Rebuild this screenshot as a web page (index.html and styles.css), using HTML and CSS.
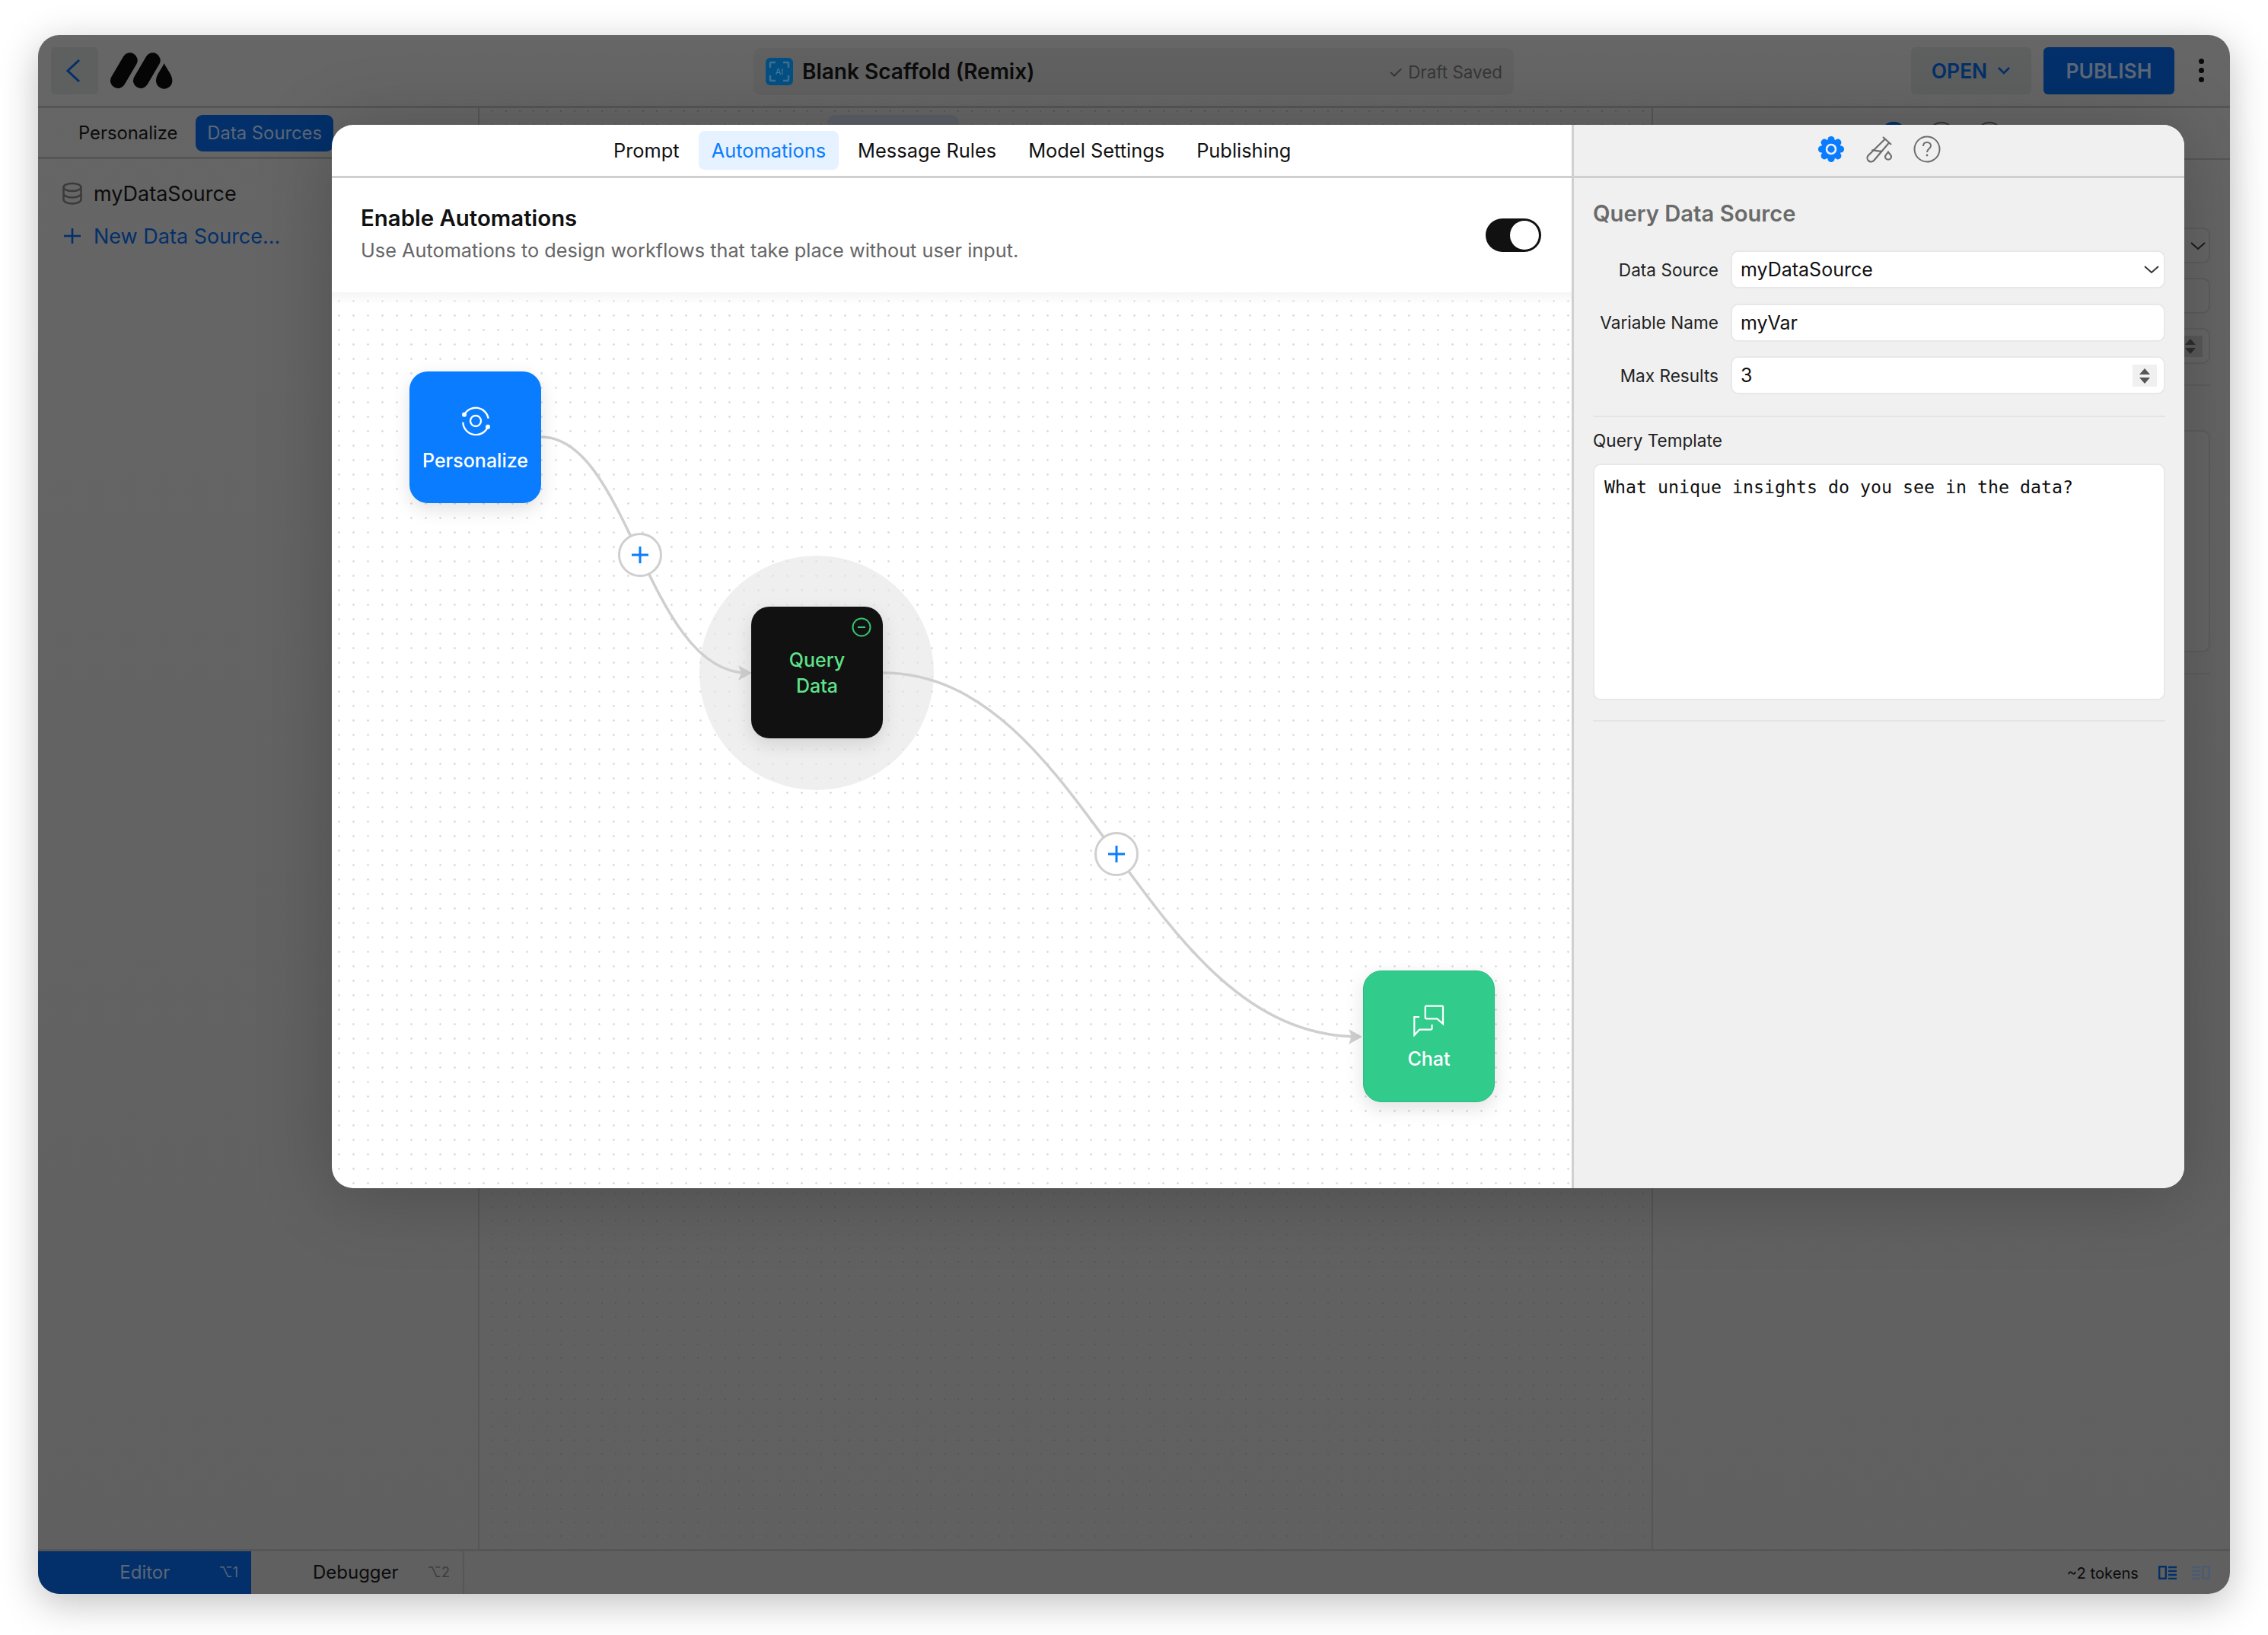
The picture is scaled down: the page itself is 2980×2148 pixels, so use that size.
FILE: index.html
```html
<!DOCTYPE html>
<html lang="en">
<head>
    <meta charset="UTF-8">
    <title>Blank Scaffold (Remix)</title>
    <link rel="stylesheet" href="styles.css">
</head>
<body>
    <div class="window">
        <header class="topbar">
            <div class="top-left">
                <button class="back-btn">
                    <svg width="20" height="30" viewBox="0 0 20 30"><path d="M18 1 L3 15 L18 29" fill="none" stroke="#03306a" stroke-width="3"/></svg>
                </button>
                <svg class="logo" width="84" height="48" viewBox="0 0 84 48">
                    <path d="M11 37 L26.700 10.300 M41 37 L56.700 10.300" stroke="#050505" stroke-width="20" stroke-linecap="round"/>
                    <path d="M71.700 14 C75 22 82.400 29 82.400 37 A10.700 10.700 0 0 1 61 37 C61 29 68.400 22 71.700 14 Z" fill="#050505"/>
                </svg>
            </div>
            <div class="title-pill">
                <div class="ai-icon">
                    <span class="ai-text">AI</span>
                    <svg width="36" height="36" viewBox="0 0 36 36"><path d="M6 13 V7 a1 1 0 0 1 1 -1 H13 M23 6 H29 a1 1 0 0 1 1 1 V13 M30 23 V29 a1 1 0 0 1 -1 1 H23 M13 30 H7 a1 1 0 0 1 -1 -1 V23" fill="none" stroke="#3f6f93" stroke-width="2.500"/></svg>
                </div>
                <span class="title-text">Blank Scaffold (Remix)</span>
                <span class="draft">✓ Draft Saved</span>
            </div>
            <div class="top-right">
                <button class="open-btn">OPEN
                    <svg width="18" height="12" viewBox="0 0 18 12"><path d="M2 2 L9 9 L16 2" fill="none" stroke="#03306a" stroke-width="2.500"/></svg>
                </button>
                <button class="publish-btn">PUBLISH</button>
                <div class="more"><i></i><i></i><i></i></div>
            </div>
        </header>

        <div class="main">
            <aside class="left-panel">
                <div class="sub-tabs">
                    <span class="sub-tab">Personalize</span>
                    <span class="sub-tab sub-tab-on">Data Sources</span>
                </div>
                <div class="source-row">
                    <svg width="28" height="30" viewBox="0 0 28 30"><g fill="none" stroke="#3a3a3a" stroke-width="2.400"><ellipse cx="14" cy="7" rx="11.500" ry="5"/><path d="M2.500 7 V23 C2.500 26 7.500 28.500 14 28.500 S25.500 26 25.500 23 V7 M2.500 15 C2.500 18 7.500 20.500 14 20.500 S25.500 18 25.500 15"/></g></svg>
                    <span>myDataSource</span>
                </div>
                <div class="source-row source-new">
                    <svg width="28" height="24" viewBox="0 0 28 24"><path d="M14 2 V22 M3 12 H25" stroke="#03306a" stroke-width="2.600"/></svg>
                    <span>New Data Source...</span>
                </div>
            </aside>
            <section class="center-panel">
                <div class="center-tab"></div>
            </section>
            <aside class="right-panel">
                <div class="right-head">
                    <span class="peek peek-blue"></span>
                    <span class="peek"></span>
                    <span class="peek"></span>
                </div>
                <div class="ghost ghost-a">
                    <svg width="20" height="12" viewBox="0 0 20 12"><path d="M1 2 L10 10 L19 2" fill="none" stroke="#1a1a1a" stroke-width="2"/></svg>
                </div>
                <div class="ghost ghost-b"></div>
                <div class="ghost ghost-c">
                    <span class="ghost-spin"><i class="up"></i><i class="down"></i></span>
                </div>
                <div class="ghost-line ghost-line-a"></div>
                <div class="ghost ghost-d"></div>
                <div class="ghost-line ghost-line-b"></div>
            </aside>
        </div>

        <footer class="bottombar">
            <div class="bottom-tab bottom-tab-on"><span class="bt-name">Editor</span><span class="bt-key">⌥1</span></div>
            <div class="bottom-tab"><span class="bt-name">Debugger</span><span class="bt-key">⌥2</span></div>
            <div class="bottom-right">
                <span class="tokens">~2 tokens</span>
                <svg width="24" height="18" viewBox="0 0 24 18"><g fill="none" stroke="#03306a" stroke-width="2.400"><rect x="1.200" y="1.200" width="8.600" height="15.600"/><path d="M13 2 H24 M13 7 H24 M13 12 H24 M13 17 H24"/></g></svg>
                <svg width="24" height="18" viewBox="0 0 24 18"><g fill="none" stroke="#4a5b73" stroke-width="2.400"><rect x="14.200" y="1.200" width="8.600" height="15.600"/><path d="M0 2 H11 M0 7 H11 M0 12 H11 M0 17 H11"/></g></svg>
            </div>
        </footer>
    </div>

    <div class="modal">
        <div class="modal-left">
            <nav class="modal-tabs">
                <a>Prompt</a>
                <a class="tab-on">Automations</a>
                <a>Message Rules</a>
                <a>Model Settings</a>
                <a>Publishing</a>
            </nav>
            <div class="enable-row">
                <div>
                    <h3>Enable Automations</h3>
                    <p>Use Automations to design workflows that take place without user input.</p>
                </div>
                <div class="toggle"><span class="knob"></span></div>
            </div>
            <div class="canvas">
                <div class="halo"></div>
                <svg class="edges" width="1630" height="1177" viewBox="0 0 1630 1177">
                    <path d="M275 190 C390 190 415 500 546 500" fill="none" stroke="#cfcfcf" stroke-width="3.500"/>
                    <path d="M724 500 C994 500 1064 978 1350 978" fill="none" stroke="#cfcfcf" stroke-width="3.500"/>
                    <path d="M534 490 L552 500 L534 510 L538 500 Z" fill="#cfcfcf"/>
                    <path d="M1336 968 L1354 978 L1336 988 L1340 978 Z" fill="#cfcfcf"/>
                </svg>

                <div class="node node-blue">
                    <svg width="40" height="40" viewBox="0 0 40 40">
                        <g fill="none" stroke="#fff" stroke-width="2.300">
                            <circle cx="20" cy="20" r="7"/>
                            <path d="M5 11.700 A17 17 0 0 1 36.700 16.700"/>
                            <path d="M36 27.700 A17 17 0 0 1 3.300 21.700"/>
                        </g>
                        <circle cx="5" cy="11.700" r="3" fill="#fff"/>
                        <circle cx="36" cy="27.700" r="3" fill="#fff"/>
                    </svg>
                    <span>Personalize</span>
                </div>

                <div class="node node-black">
                    <svg class="minus" width="26" height="26" viewBox="0 0 26 26"><circle cx="13" cy="13" r="11.500" fill="none" stroke="#35c46f" stroke-width="2"/><path d="M8 13 H18" stroke="#35c46f" stroke-width="2"/></svg>
                    <span>Query<br>Data</span>
                </div>

                <div class="node node-green">
                    <svg width="46" height="42" viewBox="0 0 46 42">
                        <path d="M10 16 H3.300 V40 L10 32.700 H25 a1.500 1.500 0 0 0 1.500 -1.500 V26" fill="none" stroke="#fff" stroke-width="2.200"/>
                        <path d="M19 1.700 H40 a1 1 0 0 1 1 1 V25 L33.300 18.300 H19 a1.300 1.300 0 0 1 -1.300 -1.300 V3 a1.300 1.300 0 0 1 1.300 -1.300 Z" fill="none" stroke="#fff" stroke-width="2.200"/>
                    </svg>
                    <span>Chat</span>
                </div>

                <div class="plus plus-one"><svg width="24" height="24" viewBox="0 0 24 24"><path d="M12 1 V23 M1 12 H23" stroke="#0a7cff" stroke-width="3"/></svg></div>
                <div class="plus plus-two"><svg width="24" height="24" viewBox="0 0 24 24"><path d="M12 1 V23 M1 12 H23" stroke="#0a7cff" stroke-width="3"/></svg></div>
            </div>
        </div>

        <div class="modal-right">
            <div class="side-icons">
                <svg width="36" height="36" viewBox="0 0 36 36">
                    <g fill="#0a7cff">
                        <circle cx="18" cy="18" r="13"/>
                        <circle cx="18" cy="5.500" r="4.600"/>
                        <circle cx="26.800" cy="9.200" r="4.600"/>
                        <circle cx="30.500" cy="18" r="4.600"/>
                        <circle cx="26.800" cy="26.800" r="4.600"/>
                        <circle cx="18" cy="30.500" r="4.600"/>
                        <circle cx="9.200" cy="26.800" r="4.600"/>
                        <circle cx="5.500" cy="18" r="4.600"/>
                        <circle cx="9.200" cy="9.200" r="4.600"/>
                    </g>
                    <circle cx="18" cy="18" r="6" fill="none" stroke="#f0f0f0" stroke-width="2.600"/>
                </svg>
                <svg width="36" height="36" viewBox="0 0 36 36"><g fill="none" stroke="#6e6e6e" stroke-width="2.200"><path d="M23 2 L34 12 M26 4.500 L3.500 26.500 A5 5 0 0 0 11.500 32.500 L31.500 9 M8.300 19.500 C12 18.500 16 21.500 20.700 20.300"/><path d="M30 21.700 C31.500 24 34 25.500 34 27.700 A4 4 0 0 1 26 27.700 C26 25.500 28.500 24 30 21.700 Z"/></g></svg>
                <svg width="36" height="36" viewBox="0 0 36 36"><circle cx="18" cy="18" r="16.500" fill="none" stroke="#6e6e6e" stroke-width="2"/><path d="M13 14 C13 10.500 15.500 9 18 9 C21 9 23 11 23 13.500 C23 17 18 17.500 18 22" fill="none" stroke="#6e6e6e" stroke-width="2"/><circle cx="18" cy="26" r="1.400" fill="#6e6e6e"/></svg>
            </div>
            <div class="side-body">
                <h3>Query Data Source</h3>
                <div class="form-row">
                    <label>Data Source</label>
                    <div class="field">myDataSource
                        <svg class="chev" width="22" height="12" viewBox="0 0 22 12"><path d="M2 2 L11 10 L20 2" fill="none" stroke="#333" stroke-width="2"/></svg>
                    </div>
                </div>
                <div class="form-row">
                    <label>Variable Name</label>
                    <div class="field">myVar</div>
                </div>
                <div class="form-row">
                    <label>Max Results</label>
                    <div class="field">3
                        <span class="spin"><i class="up"></i><i class="down"></i></span>
                    </div>
                </div>
                <div class="rule"></div>
                <label class="block-label">Query Template</label>
                <div class="template">What unique insights do you see in the data?</div>
                <div class="rule rule-end"></div>
            </div>
        </div>
    </div>
</body>
</html>
```

FILE: styles.css
```css
* {
    box-sizing: border-box;
}
body {
    margin: 0;
    width: 2980px;
    height: 2148px;
    overflow: hidden;
    background-color: #fff;
    font-family: Inter, "Liberation Sans", sans-serif;
    position: relative;
}
button {
    border: none;
    font-family: inherit;
    padding: 0;
}
h3, p {
    margin: 0;
}

/* app window, already dimmed by the modal backdrop */
.window {
    margin: 46px 50px 0;
    height: 2048px;
    background: linear-gradient(#666, #606060);
    border-radius: 28px;
    box-shadow: 0 12px 50px rgba(0, 0, 0, 0.25);
    overflow: hidden;
    display: flex;
    flex-direction: column;
}
.topbar {
    height: 96px;
    flex: none;
    border-bottom: 3px solid #565656;
    display: flex;
    justify-content: space-between;
    align-items: center;
    padding: 0 33px 0 17px;
    position: relative;
}
.top-left {
    display: flex;
    align-items: center;
    gap: 15px;
}
.back-btn {
    width: 62px;
    height: 62px;
    background-color: #5e5f5f;
    border-radius: 6px;
    display: flex;
    align-items: center;
    justify-content: center;
    padding-right: 4px;
}
.title-pill {
    position: absolute;
    left: 940px;
    top: 17px;
    width: 999px;
    height: 62px;
    background-color: #616161;
    border-radius: 10px;
    display: flex;
    align-items: center;
    padding: 0 15px 0 16px;
    gap: 12px;
}
.ai-icon {
    width: 36px;
    height: 36px;
    background-color: #045083;
    border-radius: 6px;
    position: relative;
    flex: none;
}
.ai-icon svg {
    position: absolute;
    left: 0;
    top: 0;
}
.ai-text {
    position: absolute;
    left: 0;
    right: 0;
    top: 10px;
    font-size: 11px;
    line-height: 16px;
    text-align: center;
    color: #4d7ea3;
}
.title-text {
    font-size: 28px;
    font-weight: 600;
    color: #0c0c0c;
    flex: 1;
}
.draft {
    font-size: 22.4px;
    color: #363636;
}
.top-right {
    display: flex;
    align-items: center;
}
.open-btn {
    width: 158px;
    height: 62px;
    background-color: #5e5f5f;
    border-radius: 6px;
    color: #03306a;
    font-size: 26.4px;
    font-weight: 600;
    display: flex;
    align-items: center;
    justify-content: center;
    gap: 13px;
    margin-right: 16px;
}
.publish-btn {
    width: 172px;
    height: 62px;
    background-color: #03306a;
    border-radius: 6px;
    color: #5c6777;
    font-size: 26.4px;
    font-weight: 600;
    margin-right: 32px;
}
.more {
    display: flex;
    flex-direction: column;
    gap: 5px;
    width: 8px;
}
.more i {
    width: 7px;
    height: 7px;
    border-radius: 50%;
    background-color: #0a0a0a;
}

.main {
    flex: 1;
    display: flex;
    min-height: 0;
}
.left-panel {
    width: 580px;
    flex: none;
    border-right: 2px solid #565656;
}
.sub-tabs {
    height: 67px;
    border-bottom: 3px solid #565656;
    display: flex;
    align-items: center;
    padding: 2px 0 0 34px;
}
.sub-tab {
    font-size: 23.8px;
    color: #0c0c0c;
    padding: 0 19px;
    height: 48px;
    line-height: 48px;
    border-radius: 9px;
}
.sub-tab-on {
    background-color: #03306a;
    color: #5c6777;
    padding: 0 15px;
    margin-left: 5px;
}
.source-row {
    display: flex;
    align-items: center;
    gap: 14px;
    padding-left: 31px;
    margin-top: 29px;
    font-size: 27px;
    color: #0c0c0c;
    height: 32px;
}
.source-new {
    margin-top: 24px;
    color: #03306a;
}
.center-panel {
    flex: 1;
    background-image: radial-gradient(circle, #575757 1px, transparent 1.5px);
    background-size: 18px 18px;
    background-position: 8px -5px;
    padding-left: 457px;
}
.center-tab {
    width: 173px;
    height: 40px;
    margin-top: 9px;
    background-color: #5c5f66;
    border-radius: 10px;
}
.right-panel {
    width: 760px;
    flex: none;
    border-left: 2px solid #565656;
    position: relative;
}
.right-head {
    height: 68px;
    border-bottom: 2px solid #565656;
    display: flex;
    justify-content: center;
    gap: 29px;
    padding-top: 18px;
}
.peek {
    width: 34px;
    height: 34px;
    border: 2px solid #333;
    border-radius: 50%;
}
.peek-blue {
    background-color: #03306a;
    border-color: #03306a;
}
.ghost {
    position: absolute;
    right: 26px;
    left: 600px;
    background-color: #666;
    border: 2px solid #5d5d5d;
    border-radius: 10px;
}
.ghost svg {
    position: absolute;
    right: 4px;
    top: 16px;
}
.ghost-a { top: 157px; height: 47px; }
.ghost-b { top: 223px; height: 47px; }
.ghost-c { top: 289px; height: 47px; }
.ghost-d { top: 423px; height: 292px; }
.ghost-spin {
    position: absolute;
    right: 8px;
    top: 8px;
    width: 32px;
    height: 28px;
    background-color: #595959;
    display: flex;
    flex-direction: column;
    align-items: center;
    justify-content: center;
    gap: 4px;
}
.ghost-spin i {
    width: 0;
    height: 0;
    border-left: 7px solid transparent;
    border-right: 7px solid transparent;
}
.ghost-spin .up {
    border-bottom: 8px solid #2e2e2e;
}
.ghost-spin .down {
    border-top: 8px solid #2e2e2e;
}
.ghost-line {
    position: absolute;
    left: 600px;
    right: 26px;
    height: 2px;
    background-color: #5d5d5d;
}
.ghost-line-a { top: 363px; }
.ghost-line-b { top: 742px; }

.bottombar {
    height: 59px;
    flex: none;
    border-top: 3px solid #565656;
    display: flex;
    align-items: stretch;
    position: relative;
}
.bottom-tab {
    width: 280px;
    display: flex;
    align-items: center;
    justify-content: flex-end;
    font-size: 24px;
    color: #0c0c0c;
    border-right: 2px solid #565656;
    padding: 0 17px 2px 0;
}
.bottom-tab-on {
    background-color: #03306a;
    color: #5c6777;
    border-right: none;
}
.bt-name {
    margin-right: 38px;
}
.bottom-tab-on .bt-name {
    margin-right: 64px;
}
.bt-key {
    font-size: 18px;
    color: #3c3c3c;
}
.bottom-tab-on .bt-key {
    color: #5c6777;
}
.bottom-right {
    margin-left: auto;
    display: flex;
    align-items: center;
    gap: 20px;
    padding-right: 26px;
}
.tokens {
    font-size: 20.2px;
    color: #0c0c0c;
    margin-right: 6px;
}

/* automations modal */
.modal {
    position: absolute;
    left: 436px;
    top: 164px;
    width: 2434px;
    height: 1397px;
    background-color: #fff;
    border-radius: 28px;
    box-shadow: 0 8px 100px rgba(0, 0, 0, 0.22);
    overflow: hidden;
    display: flex;
}
.modal-left {
    width: 1632px;
    flex: none;
    border-right: 3px solid #d0d0d0;
    display: flex;
    flex-direction: column;
}
.modal-tabs {
    height: 70px;
    flex: none;
    border-bottom: 3px solid #d0d0d0;
    display: flex;
    align-items: center;
    padding-left: 353px;
    font-size: 25.4px;
    color: #111;
    gap: 8px;
}
.modal-tabs a {
    padding: 0 17px;
    height: 51px;
    line-height: 51px;
    border-radius: 8px;
}
.modal-tabs .tab-on {
    background-color: #e6f2ff;
    color: #0a7cff;
}
.enable-row {
    height: 150px;
    flex: none;
    display: flex;
    justify-content: space-between;
    padding: 35px 40px 0 38px;
}
.enable-row h3 {
    font-size: 29.4px;
    font-weight: 600;
    line-height: 36px;
    color: #111;
}
.enable-row p {
    font-size: 25.3px;
    line-height: 30px;
    color: #666;
    margin-top: 9px;
}
.toggle {
    width: 73px;
    height: 44px;
    margin-top: 18px;
    background-color: #111;
    border-radius: 22px;
    padding: 3px;
    display: flex;
    justify-content: flex-end;
}
.knob {
    width: 38px;
    height: 38px;
    background-color: #fff;
    border-radius: 50%;
}
.canvas {
    flex: 1;
    position: relative;
    overflow: hidden;
    background-image: linear-gradient(#f5f5f5, rgba(255, 255, 255, 0) 16px), radial-gradient(circle, #dcdcdc 1px, transparent 1.6px);
    background-size: auto, 19px 19px;
    background-position: 0 0, 0 2px;
}
.halo {
    position: absolute;
    left: 483px;
    top: 346px;
    width: 308px;
    height: 308px;
    border-radius: 50%;
    background-color: rgba(230, 230, 230, 0.65);
}
.edges {
    position: absolute;
    left: 0;
    top: 0;
}
.node {
    position: absolute;
    width: 173px;
    height: 173px;
    border-radius: 24px;
    box-shadow: 0 8px 24px rgba(0, 0, 0, 0.12);
    display: flex;
    flex-direction: column;
    align-items: center;
    justify-content: center;
    font-size: 25px;
    font-weight: 500;
    line-height: 34px;
    color: #fff;
    text-align: center;
}
.node-blue {
    left: 102px;
    top: 104px;
    background-color: #0a7cff;
    gap: 15px;
    padding-top: 6px;
}
.node-black {
    left: 551px;
    top: 413px;
    background-color: #111;
    color: #5fe28a;
}
.minus {
    position: absolute;
    right: 15px;
    top: 14px;
}
.node-green {
    left: 1355px;
    top: 891px;
    background-color: #31cb8c;
    border: 1px solid #2cbd82;
    gap: 12px;
    padding-top: 5px;
}
.plus {
    position: absolute;
    width: 58px;
    height: 58px;
    background-color: #fff;
    border: 3px solid #cfcfcf;
    border-radius: 50%;
    display: flex;
    align-items: center;
    justify-content: center;
}
.plus-one {
    left: 376px;
    top: 316px;
}
.plus-two {
    left: 1002px;
    top: 709px;
}

.modal-right {
    flex: 1;
    background-color: #f0f0f0;
    display: flex;
    flex-direction: column;
}
.side-icons {
    height: 70px;
    flex: none;
    border-bottom: 3px solid #d0d0d0;
    display: flex;
    align-items: center;
    justify-content: center;
    gap: 27px;
    padding-bottom: 3px;
}
.side-body {
    padding: 29px 25px 0;
}
.side-body h3 {
    font-size: 29.2px;
    font-weight: 600;
    line-height: 36px;
    color: #6a6a6a;
    margin-bottom: 30px;
}
.form-row {
    display: flex;
    align-items: center;
    gap: 16px;
    margin-bottom: 19.5px;
}
.form-row label {
    width: 165px;
    flex: none;
    text-align: right;
    font-size: 22.6px;
    color: #222;
}
.field {
    flex: 1;
    height: 50px;
    background-color: #fff;
    border: 2px solid #e8e8e8;
    border-radius: 10px;
    font-size: 25px;
    line-height: 46px;
    color: #111;
    padding-left: 11px;
    position: relative;
}
.chev {
    position: absolute;
    right: 5px;
    top: 17px;
}
.spin {
    position: absolute;
    right: 9px;
    top: 9px;
    width: 32px;
    height: 29px;
    background-color: #f0f0f0;
    display: flex;
    flex-direction: column;
    align-items: center;
    justify-content: center;
    gap: 4px;
}
.spin i {
    width: 0;
    height: 0;
    border-left: 7px solid transparent;
    border-right: 7px solid transparent;
}
.spin .up {
    border-bottom: 8px solid #555;
}
.spin .down {
    border-top: 8px solid #555;
}
.rule {
    height: 2px;
    background-color: #e4e4e4;
    margin-top: 28px;
}
.block-label {
    display: block;
    font-size: 22.6px;
    line-height: 28px;
    color: #222;
    margin-top: 17px;
    margin-bottom: 16px;
}
.template {
    height: 311px;
    background-color: #fff;
    border: 2px solid #e8e8e8;
    border-radius: 10px;
    font-family: "DejaVu Sans Mono", monospace;
    font-size: 23.25px;
    line-height: 28px;
    color: #111;
    padding: 15px 13px;
}
.rule-end {
    margin-top: 26px;
}
```
